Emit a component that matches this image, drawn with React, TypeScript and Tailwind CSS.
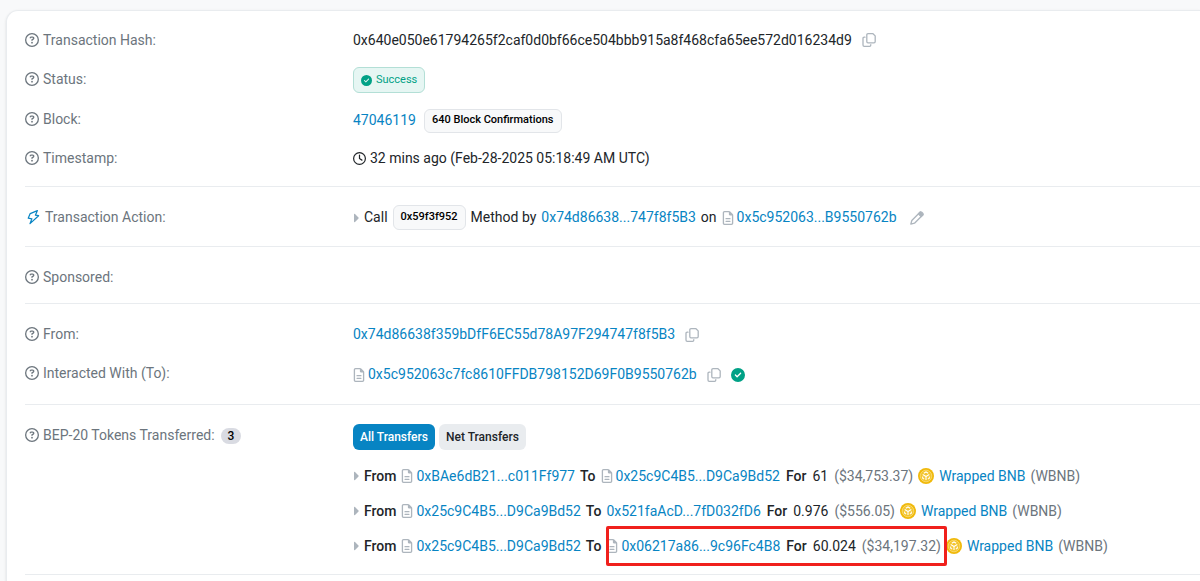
import type { ReactNode } from 'react'
import { FaCircleCheck, FaRegCircleQuestion, FaRegClock, FaRegFileLines } from 'react-icons/fa6'

const transfers = [
  { from: '0xBAe6dB21...c011Ff977', to: '0x25c9C4B5...D9Ca9Bd52', toContract: true, amount: '61', value: '($34,753.37)', marked: false },
  { from: '0x25c9C4B5...D9Ca9Bd52', to: '0x521faAcD...7fD032fD6', toContract: false, amount: '0.976', value: '($556.05)', marked: false },
  { from: '0x25c9C4B5...D9Ca9Bd52', to: '0x06217a86...9c96Fc4B8', toContract: true, amount: '60.024', value: '($34,197.32)', marked: true },
]

const CopyButton = () => (
  <button type="button" aria-label="Copy" className="text-[#adb5bd]">
    <svg viewBox="0 0 14 14" className="size-[14px]" fill="none" stroke="currentColor" strokeWidth="1.3" strokeLinejoin="round">
      <path d="M6 .7h5l2.200 2.200v5.700c0 .7-.5 1.200-1.200 1.200H6c-.7 0-1.200-.5-1.200-1.200V1.900C4.800 1.200 5.300.7 6 .7Z" />
      <path d="M3 4.200H2.200C1.500 4.200 1 4.700 1 5.400v6.700c0 .7.5 1.200 1.200 1.200h5.400c.7 0 1.200-.5 1.200-1.200v-.4" strokeLinecap="round" />
    </svg>
  </button>
)

const CaretIcon = () => (
  <svg viewBox="0 0 6 10" className="h-[10px] w-[6px] shrink-0 text-[#adb5bd]" fill="currentColor">
    <path d="M1 1.400c0-.6.6-.8 1-.4l3.500 3.500c.3.3.3.700 0 1L2 9c-.4.4-1 .2-1-.4Z" />
  </svg>
)

const BoltIcon = () => (
  <svg viewBox="0 0 16 16" className="size-4 text-[#0784c3]" fill="none" stroke="currentColor" strokeWidth="1.200" strokeLinejoin="round">
    <path d="M5.200 4.600 12.400 1.600 10.400 6.200l3.200.5L5 14.600 6.900 9.800l-3.700-.6Z" />
  </svg>
)

const PencilIcon = () => (
  <svg viewBox="0 0 14 14" className="size-[14px]" fill="none" stroke="currentColor" strokeWidth="1.300" strokeLinejoin="round">
    <path d="M.8 13.200 1.800 9.500 10 1.300c.5-.5 1.200-.5 1.700 0l1 1c.5.5.5 1.200 0 1.700L4.500 12.200.8 13.200Z" />
    <path d="m8.400 2.900 2.700 2.700 1.900-1.900-2.700-2.700Z" fill="currentColor" />
  </svg>
)

const BnbIcon = () => (
  <svg viewBox="0 0 16 16" className="size-4 shrink-0">
    <circle cx="8" cy="8" r="8" fill="#f0b90b" />
    <circle cx="8" cy="8" r="5.8" fill="#f3c52f" stroke="#f9dc7a" strokeWidth=".8" />
    <path d="M5.800 5.200 8 4l2.200 1.200M4.700 6.600 8 8.500l3.300-1.900M8 8.500V12M4.700 8.500v1.700l1.500.9M11.300 8.500v1.700l-1.500.9" fill="none" stroke="#fff" strokeWidth="1.100" />
  </svg>
)

const FileIcon = () => <FaRegFileLines className="h-[14px] w-3 shrink-0 text-[#adb5bd]" />

const Address = ({ children, contract }: { children: string; contract?: boolean }) => (
  <span className="flex items-center gap-[3px]">
    {contract && <FileIcon />}
    <a href="#" className="text-[#0784c3]">{children}</a>
  </span>
)

const Section = ({ children, className = '' }: { children: ReactNode; className?: string }) => (
  <section className={`flex flex-col gap-[14px] border-b border-[#e9ecef] ${className}`}>{children}</section>
)

const Row = ({ label, icon, badge, children }: { label: string; icon?: ReactNode; badge?: string; children?: ReactNode }) => (
  <div className="grid min-h-[25px] grid-cols-[328px_1fr] items-start">
    <div className="flex items-center gap-1 leading-6 text-[#6c757d]">
      {icon ?? <FaRegCircleQuestion className="size-[14px] shrink-0" />}
      <span>{label}</span>
      {badge && <span className="mt-0.5 ml-0.5 rounded-full bg-[#d9dbe2] px-[7px] text-[12px] leading-4 font-medium text-black">{badge}</span>}
    </div>
    <div>{children}</div>
  </div>
)

const App = () => {
  return (
    <main className="flex min-h-screen flex-col overflow-hidden bg-[#f8f9fa] pt-[10px] pl-[6px] font-['Roboto',sans-serif] text-[14px] whitespace-nowrap text-[#212529]">
      <div className="flex-1 rounded-tl-xl border-t border-l border-[#e9ecef] bg-white pl-[18px] shadow-sm">
        <Section className="pt-[17px] pb-[15px]">
          <Row label="Transaction Hash:">
            <div className="flex h-6 items-center gap-[10px]">
              <span>0x640e050e61794265f2caf0d0bf66ce504bbb915a8f468cfa65ee572d016234d9</span>
              <CopyButton />
            </div>
          </Row>
          <Row label="Status:">
            <span className="flex h-[26px] w-fit items-center gap-1 rounded-md border border-[#b3dfd6] bg-[#e6f6f3] px-[7px] text-[11px] text-[#00a186]">
              <FaCircleCheck className="size-[11px]" />
              Success
            </span>
          </Row>
          <Row label="Block:">
            <div className="flex h-[25px] items-center gap-2 pt-0.5">
              <a href="#" className="text-[#0784c3]">47046119</a>
              <span className="flex h-6 items-center rounded-md border border-[#e2e5e9] bg-[#f8f9fa] px-[7px] text-[11px] font-medium text-black">640 Block Confirmations</span>
            </div>
          </Row>
          <Row label="Timestamp:">
            <div className="flex h-6 items-center gap-1">
              <FaRegClock className="size-[13px]" />
              <span>32 mins ago (Feb-28-2025 05:18:49 AM UTC)</span>
            </div>
          </Row>
        </Section>

        <Section className="pt-[18px] pb-4">
          <Row label="Transaction Action:" icon={<BoltIcon />}>
            <div className="flex h-[25px] items-center gap-[5px]">
              <CaretIcon />
              <span>Call</span>
              <span className="flex h-[25px] items-center rounded-md border border-[#e2e5e9] bg-[#f8f9fa] px-[7px] text-[11px] font-medium text-black">0x59f3f952</span>
              <span>Method by</span>
              <Address>0x74d86638...747f8f5B3</Address>
              <span>on</span>
              <Address contract>0x5c952063...B9550762b</Address>
              <button type="button" aria-label="Edit note" className="pl-2 text-[#adb5bd]"><PencilIcon /></button>
            </div>
          </Row>
        </Section>

        <Section className="pt-[18px] pb-[13px]">
          <Row label="Sponsored:" />
        </Section>

        <Section className="pt-[18px] pb-4">
          <Row label="From:">
            <div className="flex h-[25px] items-center gap-[10px]">
              <Address>0x74d86638f359bDfF6EC55d78A97F294747f8f5B3</Address>
              <CopyButton />
            </div>
          </Row>
          <Row label="Interacted With (To):">
            <div className="flex h-[27px] items-center gap-[10px]">
              <Address contract>0x5c952063c7fc8610FFDB798152D69F0B9550762b</Address>
              <CopyButton />
              <FaCircleCheck className="size-[14px] text-[#00a186]" />
            </div>
          </Row>
        </Section>

        <Section className="pt-[18px] pb-4">
          <Row label="BEP-20 Tokens Transferred:" badge="3">
            <div className="flex gap-1 pt-px text-[12px] font-medium">
              <button type="button" className="h-[26px] rounded-md bg-[#0784c3] px-[7px] text-white">All Transfers</button>
              <button type="button" className="h-[26px] rounded-md bg-[#e9ecef] px-[7px]">Net Transfers</button>
            </div>
            <ul className="flex flex-col gap-[11px] pt-[14px]">
              {transfers.map((t) => (
                <li key={t.value} className="flex h-6 items-center gap-[5px]">
                  <CaretIcon />
                  <span className="font-medium">From</span>
                  <Address contract>{t.from}</Address>
                  <span className="font-medium">To</span>
                  <span className="relative flex h-6 items-center gap-[6px]">
                    <Address contract={t.toContract}>{t.to}</Address>
                    <span className="font-medium">For</span>
                    <span>{t.amount}</span>
                    <span className="text-[#6c757d]">{t.value}</span>
                    {t.marked && <span className="absolute -inset-y-2 -right-[6px] left-0 rounded-xs border-[3px] border-[#f0201c]" />}
                  </span>
                  <BnbIcon />
                  <a href="#" className="text-[#0784c3]">Wrapped BNB</a>
                  <span className="text-[#6c757d]">(WBNB)</span>
                </li>
              ))}
            </ul>
          </Row>
        </Section>
      </div>
    </main>
  )
}

export default App
